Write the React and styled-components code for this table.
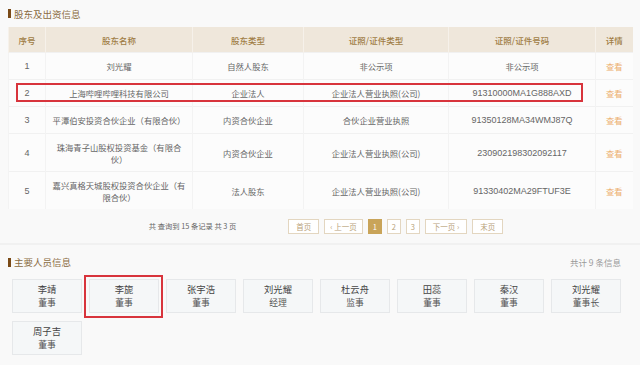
import { createGlobalStyle, styled } from 'styled-components'

const GlobalStyle = createGlobalStyle`
  html, body {
    margin: 0;
    padding: 0;
    background: #f9f9f9;
    font-family: "Noto Sans CJK SC", "Noto Sans", "Liberation Sans", sans-serif;
  }
`

const Page = styled.div`
  width: 640px;
  height: 365px;
  overflow: hidden;
  background: #f9f9f9;
`

const Section = styled.section`
  padding: 0 8px;
  border-bottom: ${props => props.divided ? '2px solid #f1f1f1' : 'none'};
`

const SectionHead = styled.div`
  height: ${props => props.h}px;
  display: flex;
  align-items: center;
  justify-content: space-between;
  padding-right: ${props => props.pr || 0}px;
`

const Title = styled.h3`
  margin: 0;
  display: flex;
  align-items: center;
  gap: 3px;
  font-size: 9.5px;
  font-weight: 400;
  color: #8a6c42;

  &::before {
    content: '';
    width: 3px;
    height: 9px;
    background: #7a4a17;
  }
`

const Total = styled.span`
  font-size: 8.5px;
  color: #999;
`

const TableWrap = styled.div`
  position: relative;
`

const Table = styled.table`
  width: 624px;
  border-collapse: collapse;
  table-layout: fixed;
  background: #fcfcfc;
`

const Th = styled.th`
  height: 25px;
  padding: 0;
  background: #efe7db;
  color: #a07d45;
  font-size: 8.5px;
  font-weight: 500;
  text-align: center;
  border-left: 1px solid #f6f1ea;
`

const Td = styled.td`
  height: ${props => props.h}px;
  padding: 0 6px;
  color: #666;
  font-size: 8.3px;
  line-height: 12px;
  text-align: center;
  border-top: 1px solid #f1f1f1;
  border-left: 1px solid #f3f3f3;
`

const Num = styled(Td)`
  font-family: "Liberation Sans", sans-serif;
  font-size: 9px;
`

const View = styled.span`
  color: #ecb071;
  font-size: 8.3px;
  white-space: nowrap;
`

const Highlight = styled.div`
  position: absolute;
  pointer-events: none;
  left: ${props => props.x}px;
  top: ${props => props.y}px;
  width: ${props => props.w}px;
  height: ${props => props.h}px;
  border: 2px solid #d8343c;
  box-sizing: border-box;
`

const Pager = styled.div`
  height: 34px;
  display: flex;
  align-items: center;
  justify-content: center;
  gap: 52px;
  padding-left: 12px;
`

const PagerInfo = styled.span`
  font-size: 7.3px;
  color: #666;
  white-space: pre;
`

const PagerButtons = styled.div`
  display: flex;
  gap: 5px;
`

const PageBtn = styled.span`
  height: 15px;
  min-width: 14px;
  padding: 0 ${props => props.pad || 0}px;
  box-sizing: border-box;
  display: flex;
  align-items: center;
  justify-content: center;
  font-size: 7.5px;
  color: ${props => props.active ? '#fff' : '#b9a27a'};
  background: ${props => props.active ? '#c9a459' : '#fff'};
  border: 1px solid ${props => props.active ? '#c9a459' : '#e3d6c0'};
`

const PeopleGrid = styled.div`
  display: grid;
  grid-template-columns: repeat(8, 70px);
  gap: 8px 7px;
  padding-left: 4px;
`

const PersonCard = styled.div`
  position: relative;
  height: 34px;
  box-sizing: border-box;
  display: flex;
  flex-direction: column;
  align-items: center;
  justify-content: center;
  background: #f5f7f8;
  border: 1px solid #e6e8ea;
  font-size: 9.3px;
  line-height: 13px;
`

const Name = styled.span`
  color: #444;
`

const Role = styled.span`
  color: #555;
  font-size: 8.8px;
`

const CardMark = styled.div`
  position: absolute;
  inset: -5px -5px -6px -6px;
  border: 2px solid #d8343c;
  pointer-events: none;
`

const shareholders = [
  { no: 1, name: '刘光耀', type: '自然人股东', cert: '非公示项', code: '非公示项', h: 26 },
  { no: 2, name: '上海哔哩哔哩科技有限公司', type: '企业法人', cert: '企业法人营业执照(公司)', code: '91310000MA1G888AXD', h: 26 },
  { no: 3, name: '平潭伯安投资合伙企业（有限合伙）', type: '内资合伙企业', cert: '合伙企业营业执照', code: '91350128MA34WMJ87Q', h: 26 },
  { no: 4, name: '珠海青子山股权投资基金（有限合伙）', type: '内资合伙企业', cert: '企业法人营业执照(公司)', code: '230902198302092117', h: 37 },
  { no: 5, name: '嘉兴真格天城股权投资合伙企业（有限合伙）', type: '法人股东', cert: '企业法人营业执照(公司)', code: '91330402MA29FTUF3E', h: 37 },
]

const people = [
  { name: '李靖', role: '董事' },
  { name: '李旎', role: '董事', marked: true },
  { name: '张宇浩', role: '董事' },
  { name: '刘光耀', role: '经理' },
  { name: '杜云舟', role: '监事' },
  { name: '田蕊', role: '董事' },
  { name: '秦汉', role: '董事' },
  { name: '刘光耀', role: '董事长' },
  { name: '周子吉', role: '董事' },
]

export default function App() {
  return (
    <Page>
      <GlobalStyle />
      <Section divided>
        <SectionHead h={27}>
          <Title>股东及出资信息</Title>
        </SectionHead>
        <TableWrap>
          <Table>
            <colgroup>
              <col style={{ width: 37 }} />
              <col style={{ width: 147 }} />
              <col style={{ width: 111 }} />
              <col style={{ width: 145 }} />
              <col style={{ width: 147 }} />
              <col style={{ width: 37 }} />
            </colgroup>
            <thead>
              <tr>
                <Th>序号</Th>
                <Th>股东名称</Th>
                <Th>股东类型</Th>
                <Th>证照/证件类型</Th>
                <Th>证照/证件号码</Th>
                <Th>详情</Th>
              </tr>
            </thead>
            <tbody>
              {shareholders.map(row => (
                <tr key={row.no}>
                  <Num h={row.h}>{row.no}</Num>
                  <Td h={row.h}>{row.name}</Td>
                  <Td h={row.h}>{row.type}</Td>
                  <Td h={row.h}>{row.cert}</Td>
                  {/[0-9]/.test(row.code) ? <Num h={row.h}>{row.code}</Num> : <Td h={row.h}>{row.code}</Td>}
                  <Td h={row.h}><View>查看</View></Td>
                </tr>
              ))}
            </tbody>
          </Table>
          <Highlight x={8} y={56} w={567} h={19} />
        </TableWrap>
        <Pager>
          <PagerInfo>共 查询到 15 条记录 共 3 页</PagerInfo>
          <PagerButtons>
            <PageBtn pad={7}>首页</PageBtn>
            <PageBtn pad={5}>‹ 上一页</PageBtn>
            <PageBtn active>1</PageBtn>
            <PageBtn>2</PageBtn>
            <PageBtn>3</PageBtn>
            <PageBtn pad={7}>下一页 ›</PageBtn>
            <PageBtn pad={7}>末页</PageBtn>
          </PagerButtons>
        </Pager>
      </Section>
      <Section>
        <SectionHead h={34} pr={11}>
          <Title>主要人员信息</Title>
          <Total>共计 9 条信息</Total>
        </SectionHead>
        <PeopleGrid>
          {people.map((p, i) => (
            <PersonCard key={i}>
              <Name>{p.name}</Name>
              <Role>{p.role}</Role>
              {p.marked && <CardMark />}
            </PersonCard>
          ))}
        </PeopleGrid>
      </Section>
    </Page>
  )
}
